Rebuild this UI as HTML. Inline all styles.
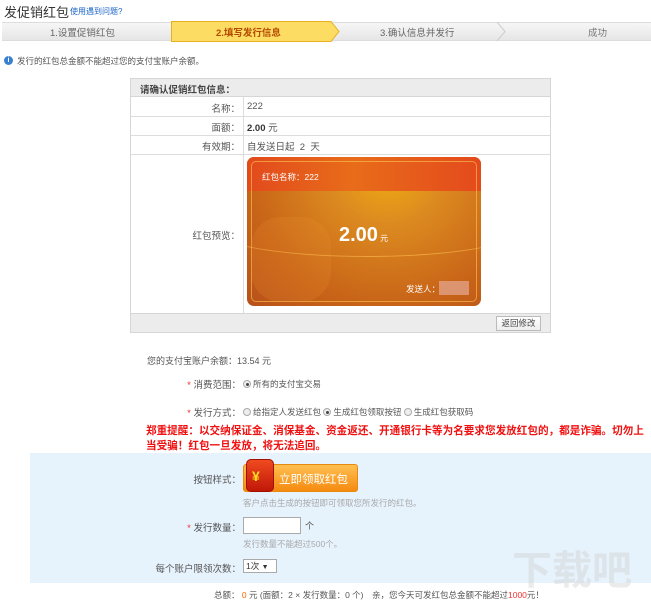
<!DOCTYPE html>
<html><head><meta charset="utf-8"><style>
*{margin:0;padding:0;box-sizing:border-box}
body{width:651px;height:600px;overflow:hidden;background:#fff;font-family:"Liberation Sans","Noto Sans CJK SC",sans-serif;font-size:9px;color:#555;position:relative}
.a{position:absolute;white-space:nowrap}
.r{text-align:right}
.radio{display:inline-block;width:8px;height:8px;border:1px solid #aaa;border-radius:50%;background:#eee;vertical-align:-1px;margin-right:2px;position:relative}
.radio.on:after{content:"";position:absolute;left:1.5px;top:1.5px;width:3px;height:3px;border-radius:50%;background:#444}
.star{color:#e33}
</style></head><body>
<div class="a" style="left:4px;top:2px;font-size:13px;color:#333">发促销红包</div>
<div class="a" style="left:70px;top:6px;font-size:8px;color:#1a64c8">使用遇到问题?</div>
<div class="a" style="left:2px;top:22px;width:649px;height:19px;background:linear-gradient(#f6f6f6,#e6e6e6);border-top:1px solid #ddd;border-bottom:1px solid #ddd"></div>
<svg class="a" style="left:171px;top:21px" width="170" height="21"><polygon points="0.5,0.5 160,0.5 168,10.5 160,20.5 0.5,20.5" fill="#fddc64" stroke="#e8b020"/></svg>
<svg class="a" style="left:495px;top:22px" width="12" height="19"><polyline points="2,0 10,9.5 2,19" fill="none" stroke="#ccc"/></svg>
<div class="a" style="left:50px;top:25px;font-size:9.5px;color:#666">1.设置促销红包</div>
<div class="a" style="left:216px;top:25px;font-size:9.5px;color:#b34a00;font-weight:bold">2.填写发行信息</div>
<div class="a" style="left:380px;top:25px;font-size:9.5px;color:#666">3.确认信息并发行</div>
<div class="a" style="left:588px;top:25px;font-size:9.5px;color:#777">成功</div>
<div class="a" style="left:4px;top:56px;width:9px;height:9px;border-radius:50%;background:#3a80d0;color:#fff;font-size:7px;text-align:center;line-height:9px;font-weight:bold">i</div>
<div class="a" style="left:17px;top:55px;font-size:8.5px;color:#555">发行的红包总金额不能超过您的支付宝账户余额。</div>
<div class="a" style="left:130px;top:78px;width:421px;height:255px;border:1px solid #d6d6d6;background:#fff"></div>
<div class="a" style="left:131px;top:79px;width:419px;height:18px;background:#ececec;border-bottom:1px solid #d6d6d6"></div>
<div class="a" style="left:140px;top:82px;font-size:9.5px;font-weight:bold;color:#444">请确认促销红包信息：</div>
<div class="a" style="left:243px;top:97px;width:1px;height:216px;background:#ddd"></div>
<div class="a" style="left:131px;top:116px;width:419px;height:1px;background:#ddd"></div>
<div class="a" style="left:131px;top:135px;width:419px;height:1px;background:#ddd"></div>
<div class="a" style="left:131px;top:154px;width:419px;height:1px;background:#ddd"></div>
<div class="a r" style="left:140px;width:100px;top:101px;font-size:9.5px">名称：</div>
<div class="a" style="left:247px;top:101px;font-size:9.5px">222</div>
<div class="a r" style="left:140px;width:100px;top:120px;font-size:9.5px">面额：</div>
<div class="a" style="left:247px;top:120px;font-size:9.5px"><b style="color:#333">2.00</b> 元</div>
<div class="a r" style="left:140px;width:100px;top:139px;font-size:9.5px">有效期：</div>
<div class="a" style="left:247px;top:139px;font-size:9.5px">自发送日起 &nbsp;2 &nbsp;天</div>
<div class="a r" style="left:140px;width:100px;top:228px;font-size:9.5px">红包预览：</div>
<div class="a" style="left:247px;top:157px;width:234px;height:149px;border-radius:7px;overflow:hidden;background:radial-gradient(ellipse at 60% 5%,#f2b010 0%,#dc8a20 30%,#c86418 70%,#b8501a 100%)">
 <div style="position:absolute;left:0;top:0;width:234px;height:34px;background:linear-gradient(90deg,#e24a1c,#e86c1a 45%,#e44a1c)"></div>
 <div style="position:absolute;left:4px;top:4px;right:4px;bottom:4px;border:1px solid rgba(255,200,80,.6);border-radius:5px"></div>
 <div style="position:absolute;left:-40px;top:40px;width:320px;height:60px;border-bottom:1px solid rgba(255,190,80,.6);border-radius:0 0 50% 50%"></div>
 <div style="position:absolute;left:4px;top:60px;width:80px;height:85px;border-radius:30px;background:rgba(240,150,50,.18)"></div>
 <div style="position:absolute;left:15px;top:14px;font-size:8.5px;color:#fff">红包名称：222</div>
 <div style="position:absolute;left:92px;top:67px;font-size:20px;color:#fff;font-weight:bold">2.00<span style="font-size:8px;font-weight:normal"> 元</span></div>
 <div style="position:absolute;left:159px;top:126px;font-size:8.5px;color:#fff">发送人：</div>
 <div style="position:absolute;left:192px;top:124px;width:30px;height:14px;background:rgba(230,170,150,.7)"></div>
</div>
<div class="a" style="left:131px;top:313px;width:419px;height:19px;background:#ececec;border-top:1px solid #d6d6d6"></div>
<div class="a" style="left:496px;top:316px;width:45px;height:15px;border:1px solid #bbb;background:linear-gradient(#fff,#eee);font-size:8.5px;text-align:center;line-height:13px;color:#444">返回修改</div>
<div class="a" style="left:147px;top:354px;font-size:9px">您的支付宝账户余额：13.54 元</div>
<div class="a r" style="left:150px;width:91px;top:377px;font-size:9.5px"><span class="star">*</span> 消费范围：</div>
<div class="a" style="left:243px;top:378px;font-size:8.5px"><span class="radio on"></span>所有的支付宝交易</div>
<div class="a r" style="left:150px;width:91px;top:405px;font-size:9.5px"><span class="star">*</span> 发行方式：</div>
<div class="a" style="left:243px;top:406px;font-size:8.5px"><span class="radio"></span>给指定人发送红包 <span class="radio on"></span>生成红包领取按钮 <span class="radio"></span>生成红包获取码</div>
<div class="a" style="left:146px;top:424px;width:505px;white-space:normal;font-size:10.6px;line-height:15px;font-weight:bold;color:#f01010">郑重提醒：以交纳保证金、消保基金、资金返还、开通银行卡等为名要求您发放红包的，都是诈骗。切勿上当受骗！红包一旦发放，将无法追回。</div>
<div class="a" style="left:30px;top:453px;width:621px;height:130px;background:#e6f2fc"></div>
<div class="a r" style="left:150px;width:91px;top:472px;font-size:9.5px">按钮样式：</div>
<div class="a" style="left:243px;top:464px;width:115px;height:28px;border:1px solid #e88a10;border-radius:3px;background:linear-gradient(#ffc050,#f58a10)"></div>
<div class="a" style="left:246px;top:459px;width:28px;height:33px;border-radius:5px;background:linear-gradient(#f04a20,#c01808);border:1px solid #a01000"></div>
<div class="a" style="left:252px;top:468px;font-size:14px;font-weight:bold;color:#ffe020">¥</div>
<div class="a" style="left:279px;top:471px;font-size:11.5px;color:#fff">立即领取红包</div>
<div class="a" style="left:243px;top:497px;font-size:8.5px;color:#aaa">客户点击生成的按钮即可领取您所发行的红包。</div>
<div class="a r" style="left:150px;width:91px;top:520px;font-size:9.5px"><span class="star">*</span> 发行数量：</div>
<div class="a" style="left:243px;top:517px;width:58px;height:17px;border:1px solid #aaa;background:#fff"></div>
<div class="a" style="left:305px;top:519px;font-size:9px">个</div>
<div class="a" style="left:243px;top:538px;font-size:8.5px;color:#aaa">发行数量不能超过500个。</div>
<div class="a r" style="left:120px;width:121px;top:561px;font-size:9.5px">每个账户限领次数：</div>
<div class="a" style="left:243px;top:559px;width:34px;height:14px;border:1px solid #aaa;background:#fff;font-size:8.5px;line-height:12px;padding-left:2px;color:#333">1次 <span style="font-size:7px">▼</span></div>
<div class="a" style="left:214px;top:589px;font-size:8.5px">总额： <span style="color:#f60">0</span> 元 (面额：2 × 发行数量：0 个)　亲，您今天可发红包总金额不能超过<span style="color:#e33">1000</span>元！</div>
<div class="a" style="left:512px;top:538px;font-size:40px;font-weight:bold;color:rgba(210,210,210,.45)">下载吧</div>
</body></html>
